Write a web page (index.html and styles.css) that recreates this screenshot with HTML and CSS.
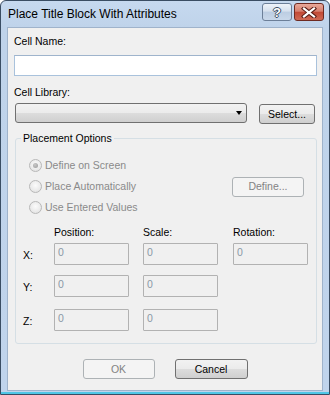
FILE: index.html
```html
<!DOCTYPE html>
<html>
<head>
<meta charset="utf-8">
<link rel="stylesheet" href="styles.css">
</head>
<body>
<div class="window">
  <div class="titlebar">
    <span class="title">Place Title Block With Attributes</span>
    <div class="caption-btns">
      <div class="cbtn help"><span class="qmark">?</span></div>
      <div class="cbtn close">
        <svg width="16" height="11" viewBox="0 0 16 11">
          <path d="M3 1.5 L13 9.5 M13 1.5 L3 9.5" stroke="#5a1e16" stroke-width="4.2" stroke-linecap="square" fill="none"/>
          <path d="M3 1.5 L13 9.5 M13 1.5 L3 9.5" stroke="#ffffff" stroke-width="2.2" stroke-linecap="square" fill="none"/>
        </svg>
      </div>
    </div>
  </div>
  <div class="client">
    <div class="lbl first">Cell Name:</div>
    <div class="textbox"></div>
    <div class="lbl second">Cell Library:</div>
    <div class="comborow">
      <div class="combo"><span class="arrow"></span></div>
      <div class="btn select">Select...</div>
    </div>
    <div class="group">
      <div class="legend">Placement Options</div>
      <div class="radiorow top">
        <span class="radio checked"></span><span class="rtext">Define on Screen</span>
      </div>
      <div class="radiorow">
        <span class="radio"></span><span class="rtext">Place Automatically</span>
        <div class="btn disabled define">Define...</div>
      </div>
      <div class="radiorow">
        <span class="radio"></span><span class="rtext">Use Entered Values</span>
      </div>
      <div class="hdrrow">
        <span class="rowlbl"></span>
        <span class="hdr c1">Position:</span>
        <span class="hdr c2">Scale:</span>
        <span class="hdr c3">Rotation:</span>
      </div>
      <div class="valrow r1">
        <span class="rowlbl">X:</span>
        <div class="vbox c1">0</div>
        <div class="vbox c2">0</div>
        <div class="vbox c3">0</div>
      </div>
      <div class="valrow r2">
        <span class="rowlbl">Y:</span>
        <div class="vbox c1">0</div>
        <div class="vbox c2">0</div>
      </div>
      <div class="valrow r3">
        <span class="rowlbl">Z:</span>
        <div class="vbox c1">0</div>
        <div class="vbox c2">0</div>
      </div>
    </div>
    <div class="btnrow">
      <div class="btn disabled ok">OK</div>
      <div class="btn cancel">Cancel</div>
    </div>
  </div>
</div>
</body>
</html>
```

FILE: styles.css
```css
* { box-sizing: border-box; }
html, body { margin: 0; padding: 0; background: #ffffff; }

.window {
  width: 330px;
  height: 395px;
  border: 1px solid #3a4d63;
  border-radius: 6px 6px 0 0;
  background: linear-gradient(to bottom, #c6d9ef 0px, #bfd3ea 26px, #c0d4ec 100%);
  display: flex;
  flex-direction: column;
  overflow: hidden;
  box-shadow: inset 0 -2px 0 #4fc6e6;
}

.titlebar {
  height: 26px;
  display: flex;
  align-items: flex-start;
  justify-content: space-between;
  padding: 2px 5px 0 7px;
}

.title {
  font-family: "Liberation Sans", Arial, sans-serif;
  font-size: 12px;
  line-height: 16px;
  padding-top: 3px;
  color: #000;
}

.caption-btns {
  display: flex;
  gap: 2px;
}

.cbtn {
  width: 30px;
  height: 18px;
  border-radius: 3px;
  display: flex;
  align-items: center;
  justify-content: center;
}

.help {
  border: 1px solid #6c7f98;
  background: linear-gradient(to bottom, #eef3f9 0%, #d6e1ee 45%, #bccde2 50%, #c9d8ea 100%);
}

.qmark {
  font-family: "Liberation Sans", Arial, sans-serif;
  font-weight: bold;
  font-size: 13px;
  line-height: 13px;
  color: #ffffff;
  text-shadow: 1px 0 0 #3d4d62, -1px 0 0 #3d4d62, 0 1px 0 #3d4d62, 0 -1px 0 #3d4d62;
}

.close {
  border: 1px solid #6e2a21;
  background: linear-gradient(to bottom, #e9a99a 0%, #d7806f 45%, #c24a36 52%, #cf6a55 100%);
}

.client {
  flex: 1;
  margin: 0 6px 3px 6px;
  border: 1px solid #9fb3cb;
  background: #f0f0f0;
  display: flex;
  flex-direction: column;
  padding-left: 6px;
  font-family: "Liberation Sans", Arial, sans-serif;
  font-size: 10.5px;
  color: #000;
}

.lbl { line-height: 15px; }
.lbl.first { margin-top: 6px; }
.lbl.second { margin-top: 9px; }

.textbox {
  margin-top: 6px;
  width: 303px;
  height: 21px;
  border: 1px solid #a9c2dc;
  border-top-color: #9fb4cc;
  background: #ffffff;
}

.comborow {
  display: flex;
  margin-top: 3px;
  margin-left: 1px;
}

.combo {
  width: 232px;
  height: 20px;
  border: 1px solid #707070;
  border-radius: 3px;
  background: linear-gradient(to bottom, #f2f2f2 0%, #ebebeb 50%, #dddddd 50%, #cfcfcf 100%);
  display: flex;
  align-items: center;
  justify-content: flex-end;
  padding-right: 4px;
}

.arrow {
  width: 0;
  height: 0;
  border-top: 4px solid #000;
  border-left: 3.5px solid transparent;
  border-right: 3.5px solid transparent;
}

.btn {
  height: 20px;
  border: 1px solid #707070;
  border-radius: 3px;
  background: linear-gradient(to bottom, #f2f2f2 0%, #ebebeb 50%, #dddddd 50%, #cfcfcf 100%);
  display: flex;
  align-items: center;
  justify-content: center;
  line-height: 15px;
  color: #000;
}

.btn.disabled {
  border-color: #adb2b5;
  background: #f4f4f4;
  color: #838383;
}

.select {
  width: 56px;
  margin-left: 12px;
  margin-top: 1px;
}

.group {
  margin-top: 14px;
  margin-left: 1px;
  width: 302px;
  border: 1px solid #d5dfe5;
  border-radius: 3px;
  padding-bottom: 12px;
  display: flex;
  flex-direction: column;
}

.legend {
  align-self: flex-start;
  margin-top: -8px;
  margin-left: 5px;
  padding: 0 2px;
  line-height: 15px;
  background: #f0f0f0;
  color: #000;
}

.radiorow {
  height: 21px;
  display: flex;
  align-items: center;
  padding-left: 13px;
}
.radiorow.top { margin-top: 9px; }

.radio {
  width: 13px;
  height: 13px;
  border-radius: 50%;
  border: 1px solid #b8b8b8;
  background: radial-gradient(circle at 50% 40%, #fbfbfb 0%, #eaeaea 60%, #dcdcdc 100%);
  display: flex;
  align-items: center;
  justify-content: center;
  margin-right: 3px;
}

.radio.checked::after {
  content: "";
  width: 5px;
  height: 5px;
  border-radius: 50%;
  background: radial-gradient(circle at 40% 35%, #c8c8c8 0%, #9a9a9a 100%);
}

.rtext { color: #8a8a8a; line-height: 15px; }

.define {
  width: 72px;
  margin-left: auto;
  margin-right: 12px;
}

.hdrrow {
  display: flex;
  margin-top: 7px;
  padding-left: 7px;
  line-height: 15px;
}

.rowlbl {
  width: 31px;
  flex: none;
  padding-top: 2px;
}

.hdr { flex: none; }
.hdr.c1 { width: 89px; }
.hdr.c2 { width: 90px; }
.hdr.c3 { width: 75px; }

.valrow {
  display: flex;
  align-items: center;
  padding-left: 7px;
  height: 22px;
}
.valrow.r1 { margin-top: 3px; }
.valrow.r2 { margin-top: 10px; }
.valrow.r3 { margin-top: 12px; }

.vbox {
  width: 75px;
  height: 22px;
  flex: none;
  border: 1px solid #b2b2b2;
  border-radius: 1px;
  background: #f0f0f0;
  color: #8b98a6;
  padding: 2px 3px;
  line-height: 13px;
}
.vbox.c1 { margin-right: 14px; }
.vbox.c2 { margin-right: 15px; }

.btnrow {
  display: flex;
  justify-content: center;
  gap: 20px;
  margin-left: -6px;
  margin-top: 15px;
}

.ok { width: 72px; }
.cancel { width: 73px; }
```
